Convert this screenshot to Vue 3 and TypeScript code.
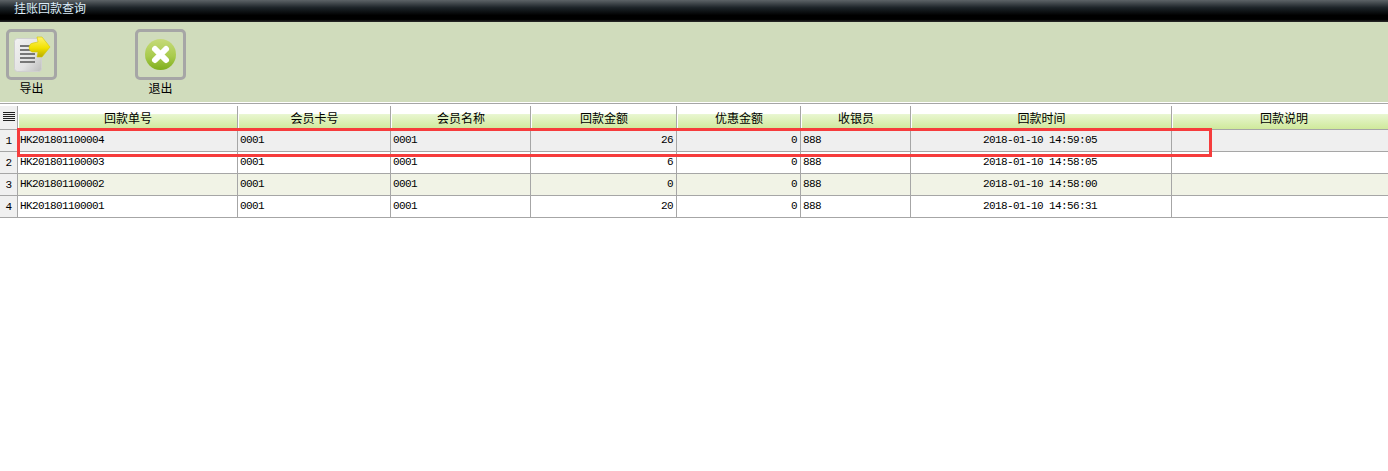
<script setup lang="ts">
const cols = [
  { t: '回款单号', w: 220 },
  { t: '会员卡号', w: 153 },
  { t: '会员名称', w: 140 },
  { t: '回款金额', w: 146 },
  { t: '优惠金额', w: 124 },
  { t: '收银员', w: 110 },
  { t: '回款时间', w: 261 },
  { t: '回款说明', w: 224 },
]
const aligns = ['l', 'l', 'l', 'r', 'r', 'l', 'c', 'l']
const rows = [
  ['HK201801100004', '0001', '0001', '26', '0', '888', '2018-01-10 14:59:05', ''],
  ['HK201801100003', '0001', '0001', '6', '0', '888', '2018-01-10 14:58:05', ''],
  ['HK201801100002', '0001', '0001', '0', '0', '888', '2018-01-10 14:58:00', ''],
  ['HK201801100001', '0001', '0001', '20', '0', '888', '2018-01-10 14:56:31', ''],
]
</script>

<template>
  <div class="page">
    <div class="title">挂账回款查询</div>
    <div class="toolbar">
      <div class="tool">
        <div class="box">
          <svg width="39" height="37" viewBox="0 0 39 37">
            <defs>
              <linearGradient id="pg" x1="0" y1="0" x2="1" y2="1">
                <stop offset="0" stop-color="#f2f2f2" />
                <stop offset="0.6" stop-color="#e2e2e2" />
                <stop offset="1" stop-color="#bcbcbc" />
              </linearGradient>
              <linearGradient id="ar" x1="0" y1="0" x2="0" y2="1">
                <stop offset="0" stop-color="#fff36a" />
                <stop offset="0.55" stop-color="#f2e100" />
                <stop offset="1" stop-color="#b8ac00" />
              </linearGradient>
            </defs>
            <rect x="2.5" y="2.5" width="27" height="33" rx="3" fill="url(#pg)" stroke="#d0d0d0" />
            <g fill="#777">
              <rect x="8" y="9" width="15" height="2" />
              <rect x="8" y="13" width="15" height="2" />
              <rect x="8" y="17" width="15" height="2" />
              <rect x="8" y="21" width="15" height="2" />
              <rect x="8" y="25" width="15" height="2" />
            </g>
            <path d="M25 1 L30 1 L38 11 L30 21 L25 21 L26 16 L20 16 Q17 15 17 11 Q18 7 21 7 L26 6 Z" fill="url(#ar)" stroke="#d4c800" stroke-width="0.6" />
          </svg>
        </div>
        <span class="label">导出</span>
      </div>
      <div class="tool second">
        <div class="box">
          <svg width="33" height="33" viewBox="0 0 33 33">
            <defs>
              <linearGradient id="gb" x1="0" y1="0" x2="0" y2="1">
                <stop offset="0" stop-color="#c6da78" />
                <stop offset="0.55" stop-color="#a9cb4e" />
                <stop offset="1" stop-color="#7fae1c" />
              </linearGradient>
            </defs>
            <circle cx="16.5" cy="16.5" r="15.5" fill="url(#gb)" />
            <path d="M11 11 L22 22 M22 11 L11 22" stroke="#fff" stroke-width="6" stroke-linecap="round" />
          </svg>
        </div>
        <span class="label">退出</span>
      </div>
    </div>
    <div class="grid">
      <div class="head">
        <div class="corner">
          <svg width="14" height="9" viewBox="0 0 14 9">
            <path d="M1 .5H13M1 2.5H13M1 4.5H13M1 6.5H13M1 8.5H13" stroke="#222" stroke-width="1" fill="none" />
          </svg>
        </div>
        <div v-for="c in cols" :key="c.t" class="hcell" :style="{ width: c.w + 'px' }">{{ c.t }}</div>
      </div>
      <div v-for="(r, i) in rows" :key="i" class="row" :class="{ sel: i === 0, alt: i === 2 }">
        <div class="num">{{ i + 1 }}</div>
        <div
          v-for="(v, j) in r"
          :key="j"
          class="cell"
          :class="aligns[j]"
          :style="{ width: cols[j].w + 'px' }"
        >{{ v }}</div>
      </div>
      <div class="mark"></div>
    </div>
  </div>
</template>

<style>
html, body { margin: 0; background: #fff; }
</style>

<style scoped>
.page {
  width: 1388px;
  height: 471px;
  overflow: hidden;
  background: #fff;
  font-family: "Noto Sans CJK SC", "Liberation Sans", sans-serif;
  font-size: 12px;
  color: #000;
}
.title {
  height: 22px;
  box-sizing: border-box;
  padding-left: 14px;
  line-height: 15px;
  color: #dcecf8;
  background: linear-gradient(#5d6367 0, #1c2328 35%, #000 70%, #000 88%, #2a2a2a 100%);
}
.toolbar {
  height: 80px;
  background: #d0dcbc;
  box-sizing: border-box;
  padding: 7px 0 0 6px;
  display: flex;
}
.tool {
  width: 51px;
  display: flex;
  flex-direction: column;
  align-items: center;
}
.second { margin-left: 78px; }
.box {
  width: 51px;
  height: 51px;
  box-sizing: border-box;
  border: 3px solid #a6a6a6;
  border-radius: 5px;
  display: flex;
  align-items: center;
  justify-content: center;
}
.label {
  line-height: 16px;
  white-space: nowrap;
}
.grid {
  position: relative;
  margin-top: 1px;
  border-top: 1px solid #a6a6a6;
}
.head {
  display: flex;
  height: 26px;
  box-sizing: border-box;
  padding-top: 2px;
  border-bottom: 1px solid #a6a6a6;
}
.corner {
  width: 18px;
  flex: none;
  box-sizing: border-box;
  border-right: 1px solid #a6a6a6;
  background: #f0f0f0;
  display: flex;
  justify-content: center;
  padding-top: 6px;
}
.hcell {
  flex: none;
  box-sizing: border-box;
  text-align: center;
  line-height: 23px;
  border-right: 1px solid #a6a6a6;
  border-left: 1px solid #fff;
  background: linear-gradient(#fff 0, #fff 36%, #e8f6d0 37%, #cfe99b 100%);
}
.row {
  display: flex;
  height: 22px;
  box-sizing: border-box;
  border-bottom: 1px solid #a6a6a6;
  font-family: "Liberation Mono", "DejaVu Sans Mono", monospace;
  font-size: 11px;
  letter-spacing: -0.6px;
  line-height: 21px;
}
.sel { background: #efefef; }
.alt { background: #f1f3e6; }
.num {
  width: 18px;
  flex: none;
  box-sizing: border-box;
  text-align: center;
  background: #f0f0f0;
  border-right: 1px solid #a6a6a6;
  padding-top: 1px;
}
.cell {
  flex: none;
  box-sizing: border-box;
  padding: 0 2px;
  border-right: 1px solid #a6a6a6;
  white-space: nowrap;
  overflow: hidden;
}
.l { text-align: left; }
.r { text-align: right; padding-right: 3px; }
.c { text-align: center; padding-right: 4px; }
.mark {
  position: absolute;
  left: 17px;
  top: 24px;
  width: 1195px;
  height: 29px;
  box-sizing: border-box;
  border: 3px solid #f63c3c;
}
</style>
